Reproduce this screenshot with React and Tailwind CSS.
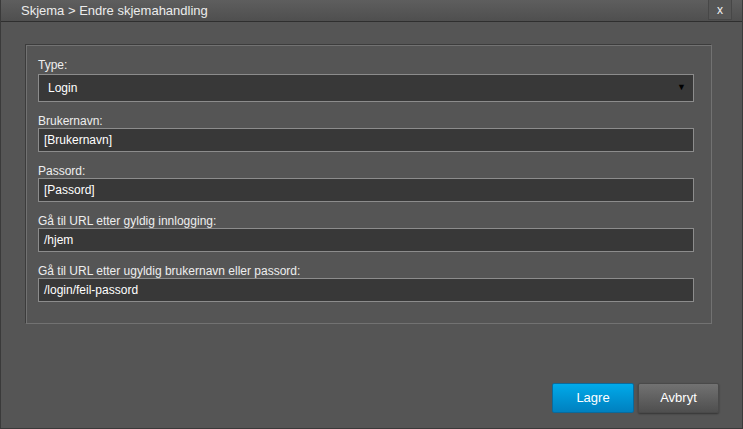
import React from 'react';

const fields = [
    { label: 'Brukernavn:', value: '[Brukernavn]' },
    { label: 'Passord:', value: '[Passord]' },
    { label: 'Gå til URL etter gyldig innlogging:', value: '/hjem' },
    { label: 'Gå til URL etter ugyldig brukernavn eller passord:', value: '/login/feil-passord' },
];

export default function App() {
    return (
        <div className="w-[743px] h-[429px] flex flex-col bg-[#555555] font-['Liberation_Sans',Arial,sans-serif] text-[#eeeeee] border-l border-r border-b border-[#3a3a3a] overflow-hidden">
            {/* title bar */}
            <div className="h-[22px] flex-shrink-0 flex items-start justify-between bg-gradient-to-b from-[#5e5e5e] to-[#4f4f4f] border-b border-[#2f2f2f]">
                <div className="pl-[20px] text-[13px] leading-[21px] text-[#ececec]">Skjema &gt; Endre skjemahandling</div>
                <button className="mr-[10px] w-[24px] h-[20px] flex items-center justify-center border-l border-r border-b border-[#474747] bg-[#565656] text-[12px] leading-none text-[#f2f2f2]">x</button>
            </div>

            {/* body */}
            <div className="flex-1 flex flex-col pl-[25px] pr-[30px] pt-[23px]">
                <div className="border border-[#727272] shadow-[-1px_-1px_0_0_#3c3c3c] pl-[11px] pr-[17px] pt-[12px] pb-[21px]">
                    <label className="block text-[12px] leading-[14px]">Type:</label>
                    <div className="mt-[2px] h-[28px] flex items-center justify-between bg-[#383838] border border-[#8c8c8c] pl-[9px] pr-[7px] text-[12px] text-white">
                        <span>Login</span>
                        <span className="text-[9px] text-black">▼</span>
                    </div>
                    {fields.map((f) => (
                        <div key={f.label} className="mt-[12px]">
                            <label className="block text-[12px] leading-[14px]">{f.label}</label>
                            <div className="h-[24px] flex items-center bg-[#383838] border border-[#8c8c8c] pl-[5px] text-[12px] text-white">{f.value}</div>
                        </div>
                    ))}
                </div>

                <div className="mt-auto flex justify-end gap-[4px] pr-[-6px] pb-[15px] -mr-[7px]">
                    <button className="w-[82px] h-[30px] rounded-[2px] border border-[#0a6a9c] bg-gradient-to-b from-[#00aaea] to-[#0080bf] text-[13px] text-white">Lagre</button>
                    <button className="w-[81px] h-[30px] rounded-[2px] border border-[#4a4a4a] bg-gradient-to-b from-[#727272] to-[#4f4f4f] shadow-[0_1px_2px_rgba(0,0,0,0.4)] text-[13px] text-white">Avbryt</button>
                </div>
            </div>
        </div>
    );
}
